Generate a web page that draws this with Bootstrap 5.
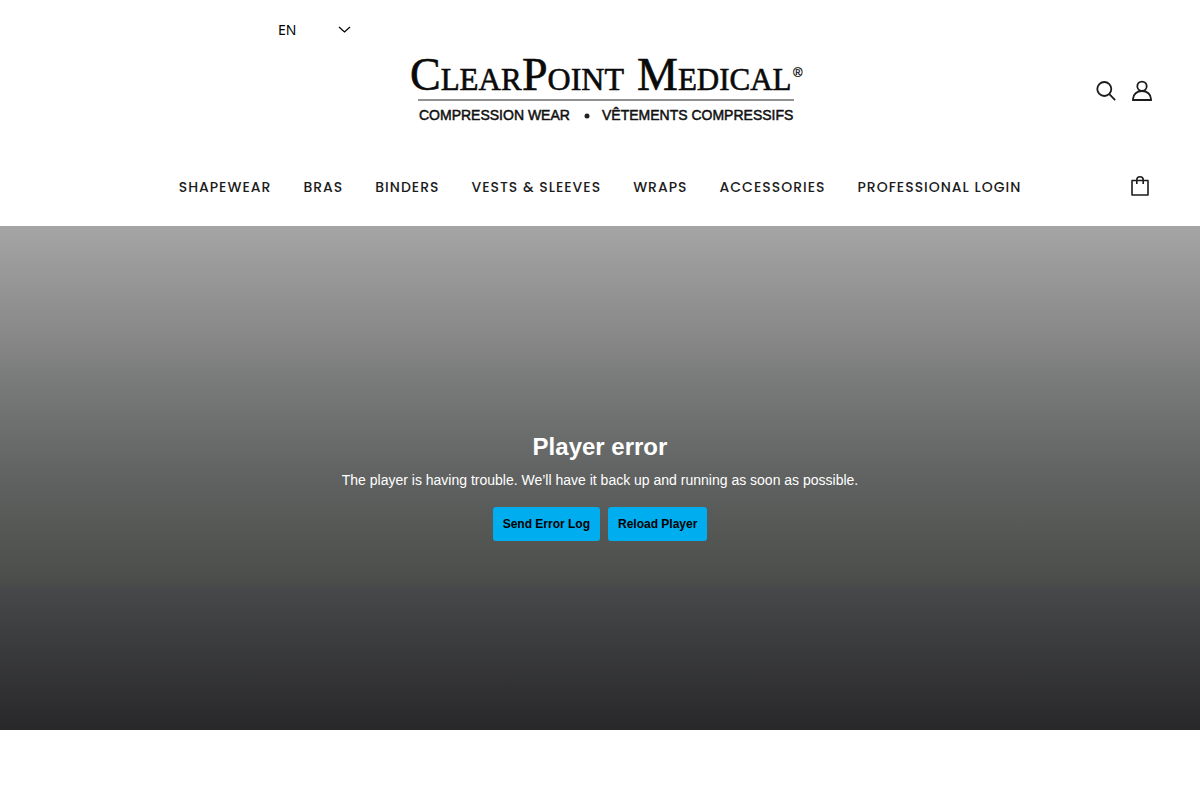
<!DOCTYPE html>
<html lang="en">
<head>
<meta charset="utf-8">
<meta name="viewport" content="width=device-width, initial-scale=1">
<title>ClearPoint Medical</title>
<link href="https://cdn.jsdelivr.net/npm/bootstrap@5.3.0/dist/css/bootstrap.min.css" rel="stylesheet">
<style>
body { font-family: "Liberation Sans", Arial, sans-serif; color: #000; }
.lang-bar { padding: 16px 0 0 22%; }
.lang-select {
  width: 100px; height: 28px; padding: 0 32px 0 14px; border: 0;
  font: 14px/28px "Noto Sans", sans-serif; color: #000;
  background-position: right 13px top 7px; background-size: 13px 13px;
  background-image: url("data:image/svg+xml,%3Csvg xmlns='http://www.w3.org/2000/svg' viewBox='0 0 13 13'%3E%3Cpath d='M1 4l5.500 5 5.500-5' fill='none' stroke='%23000' stroke-width='1.200'/%3E%3C/svg%3E");
}
.header-row { display: grid; grid-template-columns: 1fr auto 1fr; align-items: center; padding: 0 48px; }
.logo-row { height: 94px; padding-bottom: 6px; }
.menu-row { height: 88px; padding-top: 8px; }
.brand-logo { width: 408px; max-width: 100%; overflow: visible; }
.icon-link-btn { color: #1c1c1c; line-height: 0; }
.icon-group { padding-top: 6px; }
.main-menu { gap: 12px 32px; font: 500 14px/24px Poppins, Lato, sans-serif; letter-spacing: 1px; padding-top: 2px; }
.main-menu a { color: #1c1c1c; text-decoration: none; }
.player {
  aspect-ratio: 50 / 21; padding-top: 18px; color: #fff;
  background: linear-gradient(#a5a5a5, #858585 24%, #7b7d7c 29%, #5f6160 51%, #4c4e4b 70%, #474849 72%, #28282a);
}
.player h1 { font-size: 24px; line-height: 28px; font-weight: 700; margin-bottom: 9px; }
.player p { font-size: 14px; line-height: 20px; margin-bottom: 17px; }
.player-btn, .player-btn:hover {
  background: #00adef; color: #000; border: 0; border-radius: 3px;
  font-size: 12px; line-height: 18px; font-weight: 700; padding: 8px 10px;
}
</style>
</head>
<body>
<header>
  <div class="lang-bar">
    <select class="form-select lang-select" aria-label="Language"><option>EN</option><option>FR</option></select>
  </div>
  <div class="header-row logo-row">
    <span></span>
    <a href="#" aria-label="ClearPoint Medical">
      <svg class="brand-logo d-block" viewBox="396 50 408 76">
        <g font-family="Liberation Serif, Times New Roman, serif" font-size="32" fill="#0a0a0a" stroke="#0a0a0a" stroke-width=".6">
          <text x="410" y="90"><tspan font-size="46">C</tspan><tspan font-size="31">LEAR</tspan></text>
          <text x="522" y="90"><tspan font-size="46">P</tspan>OINT</text>
          <text x="637" y="90"><tspan font-size="46">M</tspan><tspan font-size="31">EDICAL</tspan></text>
        </g>
        <text x="793" y="77" font-family="Liberation Sans, Arial, sans-serif" font-size="13" stroke="#000" stroke-width=".2">®</text>
        <path d="M418 100H794" stroke="#929292" stroke-width="2"/>
        <g font-family="Liberation Sans, Arial, sans-serif" font-size="14" fill="#111" stroke="#111" stroke-width=".5">
          <text x="419" y="120">COMPRESSION WEAR</text>
          <text x="602" y="120">VÊTEMENTS COMPRESSIFS</text>
        </g>
        <circle cx="587" cy="116" r="2.500" fill="#222"/>
      </svg>
    </a>
    <div class="icon-group d-flex justify-content-end gap-3">
      <a class="icon-link-btn" href="#" aria-label="Search">
        <svg width="20" height="22" viewBox="0 0 20 22" fill="none" stroke="currentColor" stroke-width="1.800"><circle cx="8.300" cy="9" r="7"/><path d="M13.300 14.200l5.900 6"/></svg>
      </a>
      <a class="icon-link-btn" href="#" aria-label="Account">
        <svg width="20" height="22" viewBox="0 0 20 22" fill="none" stroke="currentColor" stroke-width="1.800"><circle cx="10" cy="6.300" r="4.700"/><path d="M1 20v-1c0-4.800 4-8 9-8s9 3.200 9 8v1z"/></svg>
      </a>
    </div>
  </div>
  <div class="header-row menu-row">
    <span></span>
    <nav class="main-menu d-flex flex-wrap justify-content-center" aria-label="Main">
      <a href="#">SHAPEWEAR</a>
      <a href="#">BRAS</a>
      <a href="#">BINDERS</a>
      <a href="#">VESTS &amp; SLEEVES</a>
      <a href="#">WRAPS</a>
      <a href="#">ACCESSORIES</a>
      <a href="#">PROFESSIONAL LOGIN</a>
    </nav>
    <div class="d-flex justify-content-end">
      <a class="icon-link-btn" href="#" aria-label="Cart">
        <svg width="24" height="24" viewBox="0 0 24 24" fill="none" stroke="currentColor" stroke-width="1.600"><path stroke-linejoin="round" d="M4 6.500h16V21H4zM8.800 10V6c0-2 1-3.200 3.200-3.200S15.200 4 15.200 6v4"/></svg>
      </a>
    </div>
  </div>
</header>
<main>
  <section class="player d-flex flex-column align-items-center justify-content-center text-center">
    <h1>Player error</h1>
    <p>The player is having trouble. We’ll have it back up and running as soon as possible.</p>
    <div class="d-flex gap-2">
      <button type="button" class="btn player-btn">Send Error Log</button>
      <button type="button" class="btn player-btn">Reload Player</button>
    </div>
  </section>
</main>
<script src="https://cdn.jsdelivr.net/npm/bootstrap@5.3.0/dist/js/bootstrap.bundle.min.js"></script>
</body>
</html>
